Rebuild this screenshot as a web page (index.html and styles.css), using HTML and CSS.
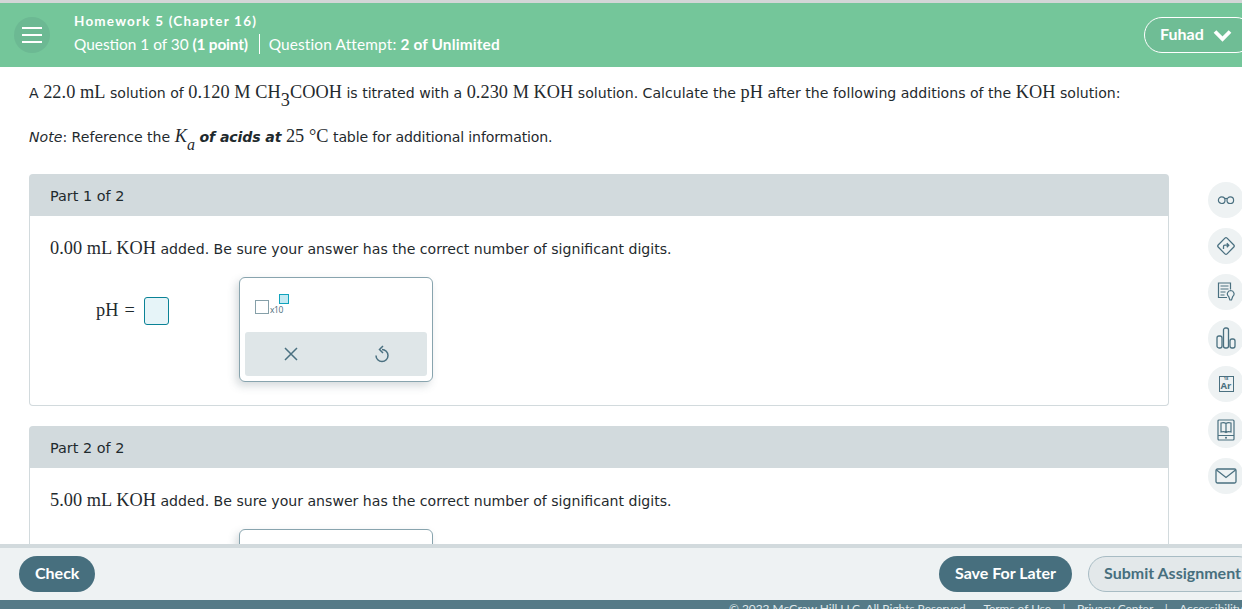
FILE: index.html
```html
<!DOCTYPE html>
<html lang="en">
<head>
<meta charset="utf-8">
<title>Homework 5 (Chapter 16)</title>
<link rel="stylesheet" href="styles.css">
</head>
<body>
<header class="header">
  <button class="menu" aria-label="Menu"><span></span><span></span><span></span></button>
  <div class="titles">
    <div class="hw-title">Homework 5 (Chapter 16)</div>
    <div class="hw-meta"><span class="q">Question 1 of 30 <b>(1 point)</b></span><span class="attempt">Question Attempt: <b>2 of Unlimited</b></span></div>
  </div>
  <button class="user">Fuhad
    <svg width="19" height="13" viewBox="0 0 19 13"><path d="M2 2.500 9.500 10 17 2.500" fill="none" stroke="#fff" stroke-width="3.800"/></svg>
  </button>
</header>
<div class="body-row">
  <main class="content">
    <p class="q-line first">A <span class="m">22.0 mL</span> solution of <span class="m">0.120 M CH<sub>3</sub>COOH</span> is titrated with a <span class="m">0.230 M KOH</span> solution. Calculate the <span class="m">pH</span> after the following additions of the <span class="m">KOH</span> solution:</p>
    <p class="q-line second"><i>Note</i>: Reference the <span class="m"><i>K<sub>a</sub></i></span> <b class="acids"><i>of acids at</i></b> <span class="m">25 °C</span> <span class="tight">table for additional information.</span></p>

    <section class="part">
      <h2 class="part-head">Part 1 of 2</h2>
      <div class="part-body">
        <p class="prompt"><span class="m">0.00 mL KOH</span> added. Be sure your answer has the correct number of significant digits.</p>
        <div class="answer">
          <div class="eq"><span class="m">pH</span><span class="m eqs">=</span><span class="ans-box"></span></div>
          <div class="palette">
            <div class="sci">
              <span class="sci-base"></span><span class="sci-x">x10</span><span class="sci-exp"></span>
            </div>
            <div class="actions">
              <svg width="16" height="16" viewBox="0 0 16 16"><path d="M2 2 14 14M14 2 2 14" stroke="#4a7080" stroke-width="1.500" fill="none"/></svg>
              <svg width="16" height="18" viewBox="0 0 16 18"><path d="M8 4.500A6 6 0 1 1 2 10.500M9 1 5.500 4.500 9 8" stroke="#4a7080" stroke-width="1.500" fill="none"/></svg>
            </div>
          </div>
        </div>
      </div>
    </section>

    <section class="part">
      <h2 class="part-head">Part 2 of 2</h2>
      <div class="part-body">
        <p class="prompt"><span class="m">5.00 mL KOH</span> added. Be sure your answer has the correct number of significant digits.</p>
        <div class="answer">
          <div class="eq"></div>
          <div class="palette"></div>
        </div>
      </div>
    </section>
  </main>
  <aside class="tools">
    <div class="tool"><svg width="18" height="10" viewBox="0 0 18 10"><g fill="none" stroke="#4a7080" stroke-width="1.200"><circle cx="4.700" cy="5.200" r="3.300"/><circle cx="13.300" cy="5.200" r="3.300"/><path d="M7.700 3.800q1.300-.8 2.600 0"/></g></svg></div>
    <div class="tool"><svg width="20" height="20" viewBox="0 0 20 20"><g fill="none" stroke="#4a7080" stroke-width="1.300"><rect x="3.700" y="3.700" width="12.600" height="12.600" rx="1.500" transform="rotate(45 10 10)"/><path d="M7.500 13v-2.500q0-1.300 1.300-1.300h3.700M10.800 7.200 12.800 9.200 10.800 11.200"/></g></svg></div>
    <div class="tool"><svg width="18" height="20" viewBox="0 0 18 20"><g fill="none" stroke="#4a7080" stroke-width="1.200"><path d="M10 15.500H1.500V1H13.500V7.500"/><path d="M3.500 4h8M3.500 7h8M3.500 10h5M3.500 13h4"/><path d="M13.700 8.500a3.400 3.400 0 0 1 2 6.100l-1.200 3.400h-1.600l-1.200-3.400a3.400 3.400 0 0 1 2-6.100z"/></g></svg></div>
    <div class="tool"><svg width="20" height="22" viewBox="0 0 20 22"><g fill="none" stroke="#4a7080" stroke-width="1.300"><rect x="1" y="9" width="5" height="12" rx="2"/><rect x="7.500" y="1" width="5" height="20" rx="2"/><rect x="14" y="12" width="5" height="9" rx="2"/></g></svg></div>
    <div class="tool"><span class="ar"><span class="ar-n">18</span><span class="ar-s">Ar</span></span></div>
    <div class="tool"><svg width="18" height="22" viewBox="0 0 18 22"><g fill="none" stroke="#4a7080" stroke-width="1.200"><rect x="1" y="1" width="16" height="20" rx="1"/><path d="M1 16.500h16M4 4q3-1 5 .5q2-1.500 5-.5v9q-3-1-5 .5q-2-1.500-5-.5zM9 4.500v9"/></g><circle cx="9" cy="18.800" r="1" fill="#4a7080"/></svg></div>
    <div class="tool"><svg width="22" height="16" viewBox="0 0 22 16"><g fill="none" stroke="#4a7080" stroke-width="1.300"><rect x="1" y="1" width="20" height="14" rx="1.500"/><path d="M1.500 2 11 9.500 20.500 2"/></g></svg></div>
  </aside>
</div>
<div class="action-bar">
  <button class="btn primary">Check</button>
  <div class="spacer"></div>
  <button class="btn primary save">Save For Later</button>
  <button class="btn secondary">Submit Assignment</button>
</div>
<footer class="footer">
  <span>© 2022 McGraw Hill LLC. All Rights Reserved.</span>
  <span class="link">Terms of Use</span><span class="sep">|</span><span>Privacy Center</span><span class="sep">|</span><span>Accessibility</span>
</footer>
</body>
</html>
```

FILE: styles.css
```css
* { box-sizing: border-box; }
html, body { margin: 0; height: 609px; overflow: hidden; }
body {
  display: flex;
  flex-direction: column;
  font-family: "DejaVu Sans", sans-serif;
  font-size: 14.100px;
  color: #1f2a2e;
  background: #fff;
  border-top: 3px solid #d3d6d7;
}
button { font: inherit; border: 0; padding: 0; }

.header {
  flex: 0 0 64px;
  display: flex;
  align-items: center;
  background: #74c69a;
  color: #fff;
  font-family: Lato, sans-serif;
  padding-left: 14px;
}
.menu {
  width: 36px;
  height: 36px;
  border-radius: 50%;
  background: #6cb993;
  display: flex;
  flex-direction: column;
  justify-content: center;
  align-items: center;
  gap: 5px;
}
.menu span { display: block; width: 20px; height: 2px; background: #fff; }
.titles { margin-left: 24px; flex: 1; }
.hw-title { font-size: 13.500px; font-weight: 700; letter-spacing: 1.200px; line-height: 18px; margin-top: -4px; }
.hw-meta { font-size: 15.400px; line-height: 20px; margin-top: 4px; display: flex; }
.hw-meta b { font-weight: 700; }
.q b { letter-spacing: -.2px; }
.q { padding-right: 11px; border-right: 1px solid #fff; }
.attempt { padding-left: 9px; letter-spacing: .15px; }
.user {
  flex: 0 0 110px;
  height: 36px;
  margin-right: -12px;
  border: 1px solid #fff;
  border-radius: 18px;
  background: #6fbd95;
  color: #fff;
  font-family: Lato, sans-serif;
  font-weight: 700;
  font-size: 16px;
  display: flex;
  align-items: center;
  gap: 9px;
  padding: 0 0 3px 15px;
}
.user svg { margin-top: 3px; }

.body-row { flex: 1; min-height: 0; display: flex; overflow: hidden; }
.content { flex: 0 0 1169px; padding-left: 29px; overflow: hidden; }
.m { font-family: "Liberation Serif", serif; font-size: 18.300px; letter-spacing: .05px; }
.m sub { font-size: 18.300px; line-height: 0; vertical-align: -8px; }
.second .m sub { font-size: 16px; }
.q-line { margin: 0; line-height: 24px; white-space: nowrap; }
.first { margin-top: 13px; }
.second { margin-top: 19px; }
.acids { letter-spacing: -.1px; }
.tight { letter-spacing: -.15px; }

.part { margin-top: 25px; }
.part + .part { margin-top: 20px; }
.part-head {
  margin: 0;
  height: 42px;
  padding: 2px 0 0 21px;
  display: flex;
  align-items: center;
  background: #d2dadd;
  border-radius: 4px 4px 0 0;
  font-size: 14.400px;
  font-weight: 400;
}
.part-body {
  height: 190px;
  padding: 20px 20px 0;
  border: 1px solid #d2dadd;
  border-top: 0;
  border-radius: 0 0 4px 4px;
}
.prompt { margin: 0; line-height: 24px; }
.answer { display: flex; margin-top: 16px; }
.eq {
  width: 189px;
  padding: 20px 0 0 46px;
  display: flex;
  align-items: flex-start;
}
.eq .m { line-height: 27px; }
.eqs { margin: 0 9px 0 6px; }
.ans-box {
  width: 25px;
  height: 28px;
  background: #e6f4f8;
  border: 1px solid #0a8296;
  border-radius: 3px;
}
.palette {
  width: 194px;
  height: 105px;
  border: 1px solid #88a4ae;
  border-radius: 6px;
  box-shadow: -3px 4px 8px rgba(70, 90, 100, .22);
  padding: 5px;
  background: #fff;
  flex: none;
}
.sci { height: 49px; display: flex; align-items: flex-start; }
.sci-base { width: 14px; height: 14px; border: 1.500px solid #86a0a9; margin: 17px 0 0 10px; }
.sci-x { font-family: "Open Sans", sans-serif; font-size: 8.500px; color: #4a6c7a; margin: 21px 0 0 1px; letter-spacing: -.4px; }
.sci-exp { width: 10px; height: 10px; border: 1.500px solid #10a3bd; background: #c3eaf3; margin: 11px 0 0 -4px; }
.actions {
  height: 44px;
  background: #dfe6e8;
  border-radius: 3px;
  display: flex;
  align-items: center;
  justify-content: space-around;
}

.tools { flex: none; margin-left: 39px; padding-top: 115px; display: flex; flex-direction: column; gap: 10px; }
.tool {
  width: 36px;
  height: 36px;
  border-radius: 50%;
  background: #eef2f3;
  display: flex;
  align-items: center;
  justify-content: center;
}
.ar {
  width: 15px; height: 16px;
  border: 1.200px solid #4a7080;
  color: #4a7080;
  font-family: "Open Sans", sans-serif;
  font-weight: 700;
  display: flex;
  flex-direction: column;
  align-items: center;
  line-height: 1;
}
.ar-n { font-size: 4px; }
.ar-s { font-size: 9.500px; }

.action-bar {
  flex: 0 0 56px;
  background: #eef2f3;
  border-top: 4px solid #d2dadd;
  display: flex;
  align-items: center;
  padding-left: 19px;
  font-family: Lato, sans-serif;
}
.spacer { flex: 1; }
.btn {
  height: 36px;
  border-radius: 18px;
  font-size: 16px;
  font-weight: 700;
  white-space: nowrap;
  padding-bottom: 3px;
}
.primary { background: #476f7e; color: #fff; padding-left: 16px; padding-right: 16px; }
.save { margin-right: 16px; }
.secondary {
  width: 168px;
  margin-right: -14px;
  background: #e3e8ea;
  color: #476f7e;
  border: 1px solid #a8bcc4;
  text-align: left;
  padding-left: 15px;
  flex: none;
}

.footer {
  flex: 0 0 9px;
  background: #557a87;
  color: #dfe7ea;
  font-family: Lato, sans-serif;
  font-size: 11.900px;
  line-height: 13px;
  display: flex;
  overflow: hidden;
  padding: 2px 0 0 729px;
  white-space: nowrap;
}
.link { margin-left: 15px; }
.sep { margin: 0 11.500px; }
```
